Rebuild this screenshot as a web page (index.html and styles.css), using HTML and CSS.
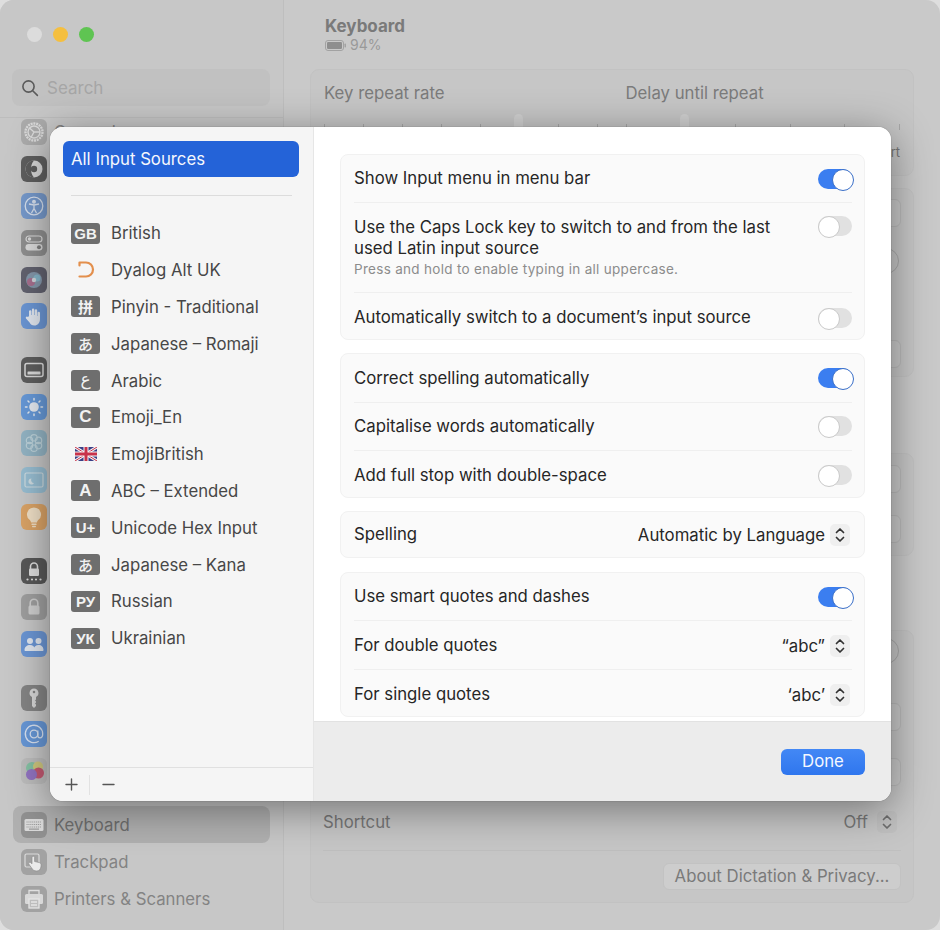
FILE: index.html
```html
<!DOCTYPE html>
<html lang="en">
<head>
    <meta charset="UTF-8" />
    <meta name="viewport" content="width=device-width, initial-scale=1" />
    <title>Keyboard - Input Sources</title>
    <link rel="stylesheet" href="styles.css">
</head>
<body>

    <div class="window">
        <aside class="sidebar">
            <div class="sidebar-head">
                <div class="lights">
                    <span class="light light-off"></span>
                    <span class="light light-yellow"></span>
                    <span class="light light-green"></span>
                </div>
                <div class="search">
                    <svg width="18" height="18" viewBox="0 0 18 18" fill="none" stroke="#5a5a5a" stroke-width="1.6"><circle cx="7.5" cy="7.5" r="5.6"/><path d="M11.7 11.7L16.4 16.4" stroke-linecap="round"/></svg>
                    <span>Search</span>
                </div>
            </div>
            <nav class="nav">
                <div class="nav-item"><span class="nav-icon ic-grey"><svg viewBox="0 0 26 26" fill="none" stroke="#dcdcdc" stroke-width="1.4"><circle cx="13" cy="13" r="8.5" stroke-dasharray="2 .8" stroke-width="2.4"/><circle cx="13" cy="13" r="6"/><path d="M13 13L8.5 9M13 13l6 0M13 13l-3 5.5"/></svg></span>General</div>
                <div class="nav-item"><span class="nav-icon ic-dark"><svg viewBox="0 0 26 26"><circle cx="13" cy="13" r="8.5" fill="#d8d8d8"/><path d="M13 4.5a8.5 8.5 0 0 0 0 17c-2-2-3-5-3-8.500s1-6.500 3-8.500z" fill="#555"/><circle cx="13" cy="13" r="3.200" fill="#555"/></svg></span></div>
                <div class="nav-item"><span class="nav-icon ic-blue"><svg viewBox="0 0 26 26" fill="none" stroke="#d9e3f2" stroke-width="1.300"><circle cx="13" cy="13" r="8.800"/><circle cx="13" cy="8.800" r="1.300" fill="#d9e3f2"/><path d="M8 11l5 1 5-1M13 12v3.500l-2.500 4.500M13 15.500l2.500 4.500"/></svg></span></div>
                <div class="nav-item"><span class="nav-icon ic-grey2"><svg viewBox="0 0 26 26"><rect x="5" y="6" width="16" height="6" rx="3" fill="none" stroke="#dcdcdc" stroke-width="1.200"/><circle cx="8.500" cy="9" r="1.700" fill="#dcdcdc"/><rect x="4.500" y="14" width="17" height="6.500" rx="3.200" fill="#dcdcdc"/><circle cx="18" cy="17.200" r="2" fill="#777"/></svg></span></div>
                <div class="nav-item"><span class="nav-icon ic-siri"><svg viewBox="0 0 26 26"><circle cx="13" cy="13" r="8" fill="#7f93a8"/><circle cx="10" cy="15" r="4" fill="#a5688a"/><circle cx="16" cy="11" r="3.500" fill="#7fb3c8"/><circle cx="13" cy="13" r="2.200" fill="#cfd6dc"/></svg></span></div>
                <div class="nav-item"><span class="nav-icon ic-blue2"><svg viewBox="0 0 26 26" fill="#e4eaf3"><path d="M8 13V8.500a1.200 1.200 0 0 1 2.400 0V12h.5V6.800a1.200 1.200 0 0 1 2.400 0V12h.5V7.500a1.200 1.200 0 0 1 2.400 0V13h.4V10a1.200 1.200 0 0 1 2.400 0v6c0 4-2.500 6.500-5.600 6.500-2.500 0-3.800-1-5-3.200L5 15.500c-.8-1.500 1-2.700 2-1.400z"/></svg></span></div>

                <div class="nav-item nav-start"><span class="nav-icon ic-dark"><svg viewBox="0 0 26 26" fill="none" stroke="#dcdcdc"><rect x="4" y="6.500" width="18" height="13" rx="2" stroke-width="1.500"/><rect x="6.500" y="14.500" width="13" height="3" rx=".6" fill="#dcdcdc" stroke="none"/></svg></span></div>
                <div class="nav-item"><span class="nav-icon ic-blue3"><svg viewBox="0 0 26 26" fill="#e8edf5" stroke="#e8edf5" stroke-width="1.500" stroke-linecap="round"><circle cx="13" cy="13" r="4.800" stroke="none"/><path d="M13 4.500v1.500M13 20v1.500M4.500 13H6M20 13h1.500M7 7l1 1M18 18l1 1M7 19l1-1M18 8l1-1"/></svg></span></div>
                <div class="nav-item"><span class="nav-icon ic-teal"><svg viewBox="0 0 26 26" fill="none" stroke="#bcd3dc" stroke-width="1.200"><circle cx="13" cy="7.800" r="3.200"/><circle cx="13" cy="18.200" r="3.200"/><circle cx="8.500" cy="10.400" r="3.200"/><circle cx="17.500" cy="10.400" r="3.200"/><circle cx="8.500" cy="15.600" r="3.200"/><circle cx="17.500" cy="15.600" r="3.200"/></svg></span></div>
                <div class="nav-item"><span class="nav-icon ic-teal2"><svg viewBox="0 0 26 26" fill="none" stroke="#cfdde3" stroke-width="1.200"><rect x="4" y="6" width="18" height="14" rx="1.500"/><path d="M10.500 11.500a3 3 0 1 0 2.500 4.500 3 3 0 0 1-2.500-4.500z" fill="#cfdde3" stroke="none"/></svg></span></div>
                <div class="nav-item"><span class="nav-icon ic-orange"><svg viewBox="0 0 26 26" fill="#f3e2c6"><path d="M13 3.500a7 7 0 0 0-4.200 12.600c.8.700 1.200 1.500 1.200 2.400h6c0-.9.400-1.700 1.200-2.400A7 7 0 0 0 13 3.500z"/><rect x="10.300" y="19.500" width="5.400" height="1.600" rx=".8"/><rect x="11" y="21.800" width="4" height="1.400" rx=".7"/></svg></span></div>

                <div class="nav-item nav-start"><span class="nav-icon ic-dark2"><svg viewBox="0 0 26 26" fill="#dedede"><path d="M9.500 11V8.500a3.500 3.500 0 0 1 7 0V11" fill="none" stroke="#dedede" stroke-width="1.600"/><rect x="8" y="10.500" width="10" height="7.500" rx="1.300"/><circle cx="6.500" cy="21.500" r="1.100"/><circle cx="11" cy="21.500" r="1.100"/><circle cx="15" cy="21.500" r="1.100"/><circle cx="19.500" cy="21.500" r="1.100"/></svg></span></div>
                <div class="nav-item"><span class="nav-icon ic-grey3"><svg viewBox="0 0 26 26" fill="#cfcfcf"><path d="M9.200 12V9a3.800 3.800 0 0 1 7.600 0v3" fill="none" stroke="#cfcfcf" stroke-width="1.600"/><rect x="7.500" y="11.500" width="11" height="9" rx="1.500"/></svg></span></div>
                <div class="nav-item"><span class="nav-icon ic-blue2"><svg viewBox="0 0 26 26" fill="#e4eaf3"><circle cx="9" cy="10" r="3"/><circle cx="17.500" cy="10" r="3"/><path d="M3.500 19c0-3 2.500-5 5.500-5s4 1.500 4.300 2.500c.3-1 1.700-2.500 4.200-2.500 3 0 5 2 5 5 0 .6-.4 1-1 1H4.500c-.6 0-1-.4-1-1z"/></svg></span></div>

                <div class="nav-item nav-start"><span class="nav-icon ic-grey4"><svg viewBox="0 0 26 26" fill="#d8d8d8"><path d="M13 3.500a4.500 4.500 0 0 0-2 8.500v9l2 2 2-2v-1.500l-1-1 1-1v-1l-1-1 1-1V12a4.500 4.500 0 0 0-2-8.500zm0 2.200a1.300 1.300 0 1 1 0 2.600 1.300 1.300 0 0 1 0-2.600z"/></svg></span></div>
                <div class="nav-item"><span class="nav-icon ic-blue4"><svg viewBox="0 0 26 26" fill="none" stroke="#d9e4f4" stroke-width="1.300"><circle cx="13" cy="13" r="3.800"/><path d="M16.800 9.500v5c0 1.500 1 2.300 2.200 2.300 1.800 0 2.700-1.800 2.700-3.800a8.700 8.700 0 1 0-4 7.300"/></svg></span></div>
                <div class="nav-item"><span class="nav-icon ic-game"><svg viewBox="0 0 26 26"><circle cx="11" cy="10" r="6" fill="#7fc0a0"/><circle cx="17" cy="8.500" r="5" fill="#d0c878"/><circle cx="17.500" cy="15" r="5.500" fill="#c2506a"/><circle cx="10.500" cy="16.500" r="5.500" fill="#8d6cc0"/></svg></span></div>

                <div class="nav-item nav-start nav-active"><span class="nav-icon ic-key"><svg viewBox="0 0 26 26"><rect x="3.500" y="7" width="19" height="12" rx="1.500" fill="#dedede"/><path d="M5.500 10h15M5.500 12.500h15M5.500 15h15" stroke="#9a9a9a" stroke-width="1.200" stroke-dasharray="1.100 .8"/><path d="M8 17.200h10" stroke="#9a9a9a" stroke-width="1.200"/></svg></span>Keyboard</div>
                <div class="nav-item"><span class="nav-icon ic-key2"><svg viewBox="0 0 26 26"><rect x="4" y="5" width="14" height="13" rx="1.500" fill="none" stroke="#dedede" stroke-width="1.200"/><path d="M11 8.500a1.300 1.300 0 0 1 2.600 0v4l4.500 1c1.200.3 2 1.200 2 2.500 0 2.800-1 6-4.500 6-2.500 0-3.800-1-5-3l-2.800-4c-.8-1.300.8-2.400 1.900-1.400l1.300 1.200z" fill="#eeeeee" stroke="#8a8a8a" stroke-width=".7"/></svg></span>Trackpad</div>
                <div class="nav-item"><span class="nav-icon ic-key2"><svg viewBox="0 0 26 26" fill="none" stroke="#e2e2e2" stroke-width="1.300"><path d="M8 8V4.500h10V8"/><rect x="4" y="8" width="18" height="10" rx="1.500" fill="#dadada" stroke="none"/><rect x="8" y="13" width="10" height="9" fill="#bdbdbd" stroke="#e8e8e8"/><path d="M10 16h6M10 19h6" stroke="#e8e8e8"/></svg></span>Printers &amp; Scanners</div>
            </nav>
        </aside>

        <main class="main">
            <div class="title-block">
                <h1>Keyboard</h1>
                <div class="battery">
                    <svg width="22" height="11" viewBox="0 0 22 11"><rect x=".5" y=".5" width="18" height="10" rx="2.500" fill="none" stroke="#a2a2a2"/><rect x="2" y="2" width="15" height="7" rx="1.200" fill="#8e8e8e"/><rect x="19.500" y="3.500" width="1.500" height="4" rx=".7" fill="#a2a2a2"/></svg>
                    <span>94%</span>
                </div>
            </div>

            <section class="card card-repeat">
                <div class="slider-col">
                    <div class="slider-label">Key repeat rate</div>
                    <div class="slider">
                        <i></i><i></i><i></i><i></i><i></i><i></i><i></i><i></i>
                        <span class="thumb thumb-rate"></span>
                    </div>
                </div>
                <div class="slider-col">
                    <div class="slider-label">Delay until repeat</div>
                    <div class="slider">
                        <i></i><i></i><i></i><i></i><i></i><i></i>
                        <span class="thumb thumb-delay"></span>
                    </div>
                    <div class="slider-end">Short</div>
                </div>
            </section>

            <section class="card card-options">
                <div class="row"><span class="ghost-btn"></span></div>
                <div class="row"><span class="ghost-circle"></span></div>
                <div class="row"><span class="ghost-btn"></span></div>
            </section>

            <section class="card card-text">
                <div class="row"><span class="ghost-btn"></span></div>
                <div class="row"><span class="ghost-btn"></span></div>
            </section>

            <section class="card card-dictation">
                <div class="row"><span class="ghost-circle"></span></div>
                <div class="row"><span class="ghost-btn"></span></div>
                <div class="row"><span class="ghost-btn"></span></div>
                <div class="row">
                    <span class="row-name">Shortcut</span>
                    <span class="row-value">Off</span>
                    <span class="stepper stepper-dim"><svg width="10" height="16" viewBox="0 0 10 16" fill="none" stroke="#6e6e6e" stroke-width="1.700" stroke-linecap="round" stroke-linejoin="round"><path d="M1.500 5.500L5 2l3.500 3.500M1.500 10.500L5 14l3.500-3.500"/></svg></span>
                </div>
                <div class="row row-about"><button class="about-btn">About Dictation &amp; Privacy...</button></div>
            </section>
        </main>
    </div>

    <div class="modal">
        <div class="modal-side">
            <div class="source-all">All Input Sources</div>
            <div class="source-divider"></div>
            <div class="source-list">
                <div class="source"><span class="badge">GB</span>British</div>
                <div class="source"><span class="badge badge-clear"><svg width="20" height="20" viewBox="0 0 20 20" fill="none" stroke="#e38f4c" stroke-width="2.200" stroke-linecap="round" stroke-linejoin="round"><path d="M3.500 5.500V2.500h6.500a7 7 0 0 1 0 14H3.500"/></svg></span>Dyalog Alt UK</div>
                <div class="source"><span class="badge badge-cjk badge-han">拼</span>Pinyin - Traditional</div>
                <div class="source"><span class="badge badge-cjk">あ</span>Japanese – Romaji</div>
                <div class="source"><span class="badge badge-arabic">ع</span>Arabic</div>
                <div class="source"><span class="badge badge-big">C</span>Emoji_En</div>
                <div class="source"><span class="badge badge-clear"><svg width="22" height="14" viewBox="0 0 22 14"><rect width="22" height="14" rx="1.500" fill="#3a3f86"/><path d="M0 0L22 14M22 0L0 14" stroke="#f4f4f4" stroke-width="3"/><path d="M0 0L22 14M22 0L0 14" stroke="#c8324a" stroke-width="1"/><path d="M11 0v14M0 7h22" stroke="#f4f4f4" stroke-width="5"/><path d="M11 0v14M0 7h22" stroke="#c8324a" stroke-width="3"/></svg></span>EmojiBritish</div>
                <div class="source"><span class="badge badge-big">A</span>ABC – Extended</div>
                <div class="source"><span class="badge">U+</span>Unicode Hex Input</div>
                <div class="source"><span class="badge badge-cjk">あ</span>Japanese – Kana</div>
                <div class="source"><span class="badge">РУ</span>Russian</div>
                <div class="source"><span class="badge">УК</span>Ukrainian</div>
            </div>
            <div class="modal-tools">
                <span class="tool"><svg width="13" height="13" viewBox="0 0 13 13" stroke="#555" stroke-width="1.400" stroke-linecap="round"><path d="M6.500 1v11M1 6.500h11"/></svg></span>
                <span class="tool-sep"></span>
                <span class="tool"><svg width="13" height="13" viewBox="0 0 13 13" stroke="#555" stroke-width="1.400" stroke-linecap="round"><path d="M1 6.500h11"/></svg></span>
            </div>
        </div>

        <div class="modal-main">
            <div class="modal-content">
                <div class="group">
                    <div class="item">
                        <span class="item-text">Show Input menu in menu bar</span>
                        <span class="toggle on"></span>
                    </div>
                    <div class="item item-tall">
                        <div class="item-text">
                            Use the Caps Lock key to switch to and from the last used Latin input source
                            <div class="item-note">Press and hold to enable typing in all uppercase.</div>
                        </div>
                        <span class="toggle"></span>
                    </div>
                    <div class="item">
                        <span class="item-text">Automatically switch to a document’s input source</span>
                        <span class="toggle"></span>
                    </div>
                </div>

                <div class="group">
                    <div class="item">
                        <span class="item-text">Correct spelling automatically</span>
                        <span class="toggle on"></span>
                    </div>
                    <div class="item">
                        <span class="item-text">Capitalise words automatically</span>
                        <span class="toggle"></span>
                    </div>
                    <div class="item">
                        <span class="item-text">Add full stop with double-space</span>
                        <span class="toggle"></span>
                    </div>
                </div>

                <div class="group">
                    <div class="item item-short">
                        <span class="item-text">Spelling</span>
                        <span class="picker">Automatic by Language<span class="stepper"><svg width="10" height="16" viewBox="0 0 10 16" fill="none" stroke="#333" stroke-width="1.700" stroke-linecap="round" stroke-linejoin="round"><path d="M1.500 5.500L5 2l3.500 3.500M1.500 10.500L5 14l3.500-3.500"/></svg></span></span>
                    </div>
                </div>

                <div class="group group-quotes">
                    <div class="item">
                        <span class="item-text">Use smart quotes and dashes</span>
                        <span class="toggle on"></span>
                    </div>
                    <div class="item">
                        <span class="item-text">For double quotes</span>
                        <span class="picker">“abc”<span class="stepper"><svg width="10" height="16" viewBox="0 0 10 16" fill="none" stroke="#333" stroke-width="1.700" stroke-linecap="round" stroke-linejoin="round"><path d="M1.500 5.500L5 2l3.500 3.500M1.500 10.500L5 14l3.500-3.500"/></svg></span></span>
                    </div>
                    <div class="item">
                        <span class="item-text">For single quotes</span>
                        <span class="picker">‘abc’<span class="stepper"><svg width="10" height="16" viewBox="0 0 10 16" fill="none" stroke="#333" stroke-width="1.700" stroke-linecap="round" stroke-linejoin="round"><path d="M1.500 5.500L5 2l3.500 3.500M1.500 10.500L5 14l3.500-3.500"/></svg></span></span>
                    </div>
                </div>
            </div>
            <div class="modal-foot">
                <button class="done-btn">Done</button>
            </div>
        </div>
    </div>

</body>
</html>
```

FILE: styles.css
```css
* {
    box-sizing: border-box;
}
html, body {
    height: 100%;
}
body {
    margin: 0;
    overflow: hidden;
    background: #dedede;
    font-family: Inter, "Noto Sans", sans-serif;
    font-size: 16.75px;
}

/* window behind the sheet */
.window {
    display: flex;
    width: 940px;
    height: 930px;
    background: #c9c9c9;
    border-radius: 14px;
    overflow: hidden;
}
.sidebar {
    width: 284px;
    flex: none;
    background: #c7c7c7;
    border-right: 1px solid #bebebe;
    display: flex;
    flex-direction: column;
}
.sidebar-head {
    height: 118px;
    flex: none;
    border-bottom: 1px solid #bdbdbd;
}
.lights {
    display: flex;
    gap: 11px;
    padding: 27px 0 0 27px;
}
.light {
    width: 15px;
    height: 15px;
    border-radius: 50%;
}
.light-off {
    background: #dcdcdc;
}
.light-yellow {
    background: #f5bf3f;
}
.light-green {
    background: #5fc452;
}
.search {
    display: flex;
    align-items: center;
    gap: 8px;
    height: 37px;
    margin: 27px 13px 0 12px;
    padding-left: 9px;
    background: #c1c1c1;
    border-radius: 8px;
    color: #a6a6a6;
    font-size: 17px;
}
.nav {
    flex: 1;
    overflow: hidden;
    padding: 0 8px 0 21px;
}
.nav-item {
    display: flex;
    align-items: center;
    gap: 7px;
    height: 36.8px;
    color: #838383;
    font-size: 16.75px;
}
.nav-item:first-child {
    margin-top: -4px;
}
.nav-start {
    margin-top: 16.7px;
}
.nav-active {
    margin-left: -8px;
    margin-right: 5px;
    margin-bottom: 0.6px;
    padding-left: 8px;
    background: #b0b0b0;
    border-radius: 8px;
    color: #6e6e6e;
}
.nav-icon {
    width: 26px;
    height: 26px;
    flex: none;
    border-radius: 6px;
    overflow: hidden;
    opacity: 0.92;
}
.nav-icon svg {
    display: block;
    width: 26px;
    height: 26px;
}
.ic-grey { background: #a9a9a9; }
.ic-dark { background: #565656; }
.ic-blue { background: #7096cc; }
.ic-grey2 { background: #8a8a8a; }
.ic-siri { background: #5a5a68; }
.ic-blue2 { background: #6492d6; }
.ic-blue3 { background: #5f96da; }
.ic-teal { background: #8fb3c4; }
.ic-teal2 { background: #93bdd2; }
.ic-orange { background: #dca05e; }
.ic-dark2 { background: #4f4f4f; }
.ic-grey3 { background: #9c9c9c; }
.ic-grey4 { background: #7f7f7f; }
.ic-blue4 { background: #5f93d8; }
.ic-game { background: #bcbcbc; }
.ic-key { background: #8f8f8f; }
.ic-key2 { background: #9f9f9f; }

.main {
    flex: 1;
    padding: 0 26px 0 26px;
    color: #777;
}
.title-block {
    height: 69px;
    padding: 16px 0 0 15px;
}
.title-block h1 {
    margin: 0;
    font-size: 17px;
    line-height: 20px;
    font-weight: 700;
    color: #7a7a7a;
}
.battery {
    display: flex;
    align-items: center;
    gap: 3px;
    font-size: 14px;
    line-height: 18px;
    color: #999;
}

.card {
    background: #c6c6c6;
    border: 1px solid #c2c2c2;
    border-radius: 9px;
    margin-bottom: 12px;
}
.card-repeat {
    display: flex;
    height: 107px;
    padding: 13px 13px 0;
    gap: 27px;
}
.slider-col {
    flex: 1;
}
.slider-label {
    line-height: 20px;
    color: #7b7b7b;
}
.slider {
    position: relative;
    display: flex;
    justify-content: space-between;
    margin-top: 21px;
}
.slider i {
    width: 1px;
    height: 6px;
    background: #a8a8a8;
}
.thumb {
    position: absolute;
    top: -10px;
    width: 9px;
    height: 24px;
    background: #d0d0d0;
    border-radius: 5px;
}
.thumb-rate {
    left: 190px;
}
.thumb-delay {
    left: 54px;
}
.slider-end {
    text-align: right;
    margin-top: 14px;
    font-size: 13px;
    color: #777;
}
.card-options {
    height: 189px;
    margin-bottom: 76px;
    padding: 0 12px;
}
.card-text {
    height: 103px;
    margin-bottom: 74px;
    padding: 0 12px;
}
.card-dictation {
    height: 273px;
    margin-bottom: 0;
    padding: 0 12px;
}
.row {
    display: flex;
    align-items: center;
    justify-content: flex-end;
}
.card-options .row:nth-child(1) {
    height: 48px;
}
.card-options .row:nth-child(2) {
    height: 48px;
}
.card-options .row:nth-child(3) {
    height: 92px;
    padding-top: 46px;
}
.card-text .row {
    height: 50px;
}
.card-dictation .row:nth-child(1) {
    height: 40px;
}
.card-dictation .row:nth-child(2) {
    height: 54px;
    margin-top: 19px;
}
.card-dictation .row:nth-child(3) {
    height: 56px;
}
.card-dictation .row:nth-child(4) {
    height: 44px;
    margin-bottom: 6px;
}
.ghost-btn {
    width: 60px;
    height: 28px;
    background: #c9c9c9;
    border: 1px solid #bababa;
    border-radius: 6px;
}
.ghost-circle {
    width: 26px;
    height: 26px;
    border: 1px solid #a9a9a9;
    border-radius: 50%;
    margin-right: 2px;
}
.row-name {
    margin-right: auto;
    color: #777;
}
.row-value {
    color: #777;
    margin-right: 9px;
}
.row-about {
    height: 52px;
    border-top: 1px solid #bfbfbf;
}
.about-btn {
    width: 238px;
    height: 27px;
    background: #cdcdcd;
    border: 1px solid #c2c2c2;
    border-radius: 6px;
    font-family: inherit;
    font-size: 16.75px;
    color: #7a7a7a;
    padding: 0 0 1px;
}
.stepper {
    display: inline-flex;
    align-items: center;
    justify-content: center;
    width: 20px;
    height: 22px;
    margin-left: 5px;
    background: #efefef;
    border-radius: 5px;
}
.stepper-dim {
    background: #c0c0c0;
    margin: 0 4px 0 0;
}

/* input sources sheet */
.modal {
    position: absolute;
    left: 50px;
    top: 127px;
    width: 841px;
    height: 674px;
    display: flex;
    border-radius: 13px;
    overflow: hidden;
    box-shadow: 0 0 0 1px rgba(0, 0, 0, 0.06), 0 8px 42px rgba(0, 0, 0, 0.42);
    background: white;
}
.modal-side {
    width: 264px;
    flex: none;
    display: flex;
    flex-direction: column;
    background: #f5f5f5;
    border-right: 1px solid #e6e6e6;
}
.source-all {
    margin: 14px 14px 0 13px;
    height: 36px;
    line-height: 37px;
    padding-left: 8px;
    background: #2463d8;
    border-radius: 6px;
    color: #f5f7fd;
}
.source-divider {
    height: 1px;
    margin: 18px 21px 0;
    background: #dcdcdc;
}
.source-list {
    flex: 1;
    padding: 19px 0 0 21px;
}
.source {
    display: flex;
    align-items: center;
    gap: 11px;
    height: 36.8px;
    color: #474747;
}
.badge {
    display: inline-flex;
    align-items: center;
    justify-content: center;
    width: 29px;
    height: 21px;
    flex: none;
    background: #6e6e6e;
    border-radius: 3px;
    color: #f2f2f2;
    font-size: 15px;
    font-weight: 700;
    font-family: "Liberation Sans", "DejaVu Sans", sans-serif;
}
.badge-big {
    font-size: 17px;
}
.badge-arabic {
    padding-bottom: 4px;
    font-size: 17px;
    font-weight: 400;
    font-family: "DejaVu Sans", sans-serif;
}
.badge-cjk {
    font-size: 15px;
    font-weight: 500;
    font-family: "Noto Sans CJK JP", sans-serif;
}
.badge-han {
    font-weight: 700;
    font-family: "Noto Sans CJK SC", sans-serif;
}
.badge-clear {
    background: none;
}
.modal-tools {
    display: flex;
    align-items: center;
    height: 34px;
    border-top: 1px solid #e0e0e0;
    padding-left: 15px;
}
.tool {
    display: flex;
}
.tool-sep {
    width: 1px;
    height: 20px;
    margin: 0 12px 0 11px;
    background: #e2e2e2;
}
.modal-main {
    flex: 1;
    display: flex;
    flex-direction: column;
}
.modal-content {
    flex: 1;
    background: white;
    padding: 27px 26px 0 26px;
    display: flex;
    flex-direction: column;
    gap: 13.6px;
    overflow: hidden;
}
.group {
    background: #fafafa;
    border: 1px solid #f1f1f1;
    border-radius: 8px;
    flex: none;
}
.item {
    display: flex;
    align-items: center;
    justify-content: space-between;
    height: 48.2px;
    margin: 0 12px 0 13px;
    border-top: 1px solid #efefef;
    color: #262626;
}
.item:first-child {
    height: 47.4px;
    border-top: none;
}
.item:last-child {
    height: 46.8px;
    padding-top: 3px;
}
.item-tall {
    align-items: flex-start;
    height: 90px;
    padding-top: 14px;
}
.item.item-short {
    height: 45px;
    padding-top: 0;
}
.group .item-tall + .item {
    height: 46.4px;
}
.group-quotes .item:nth-child(2) {
    height: 48.9px;
    padding-top: 1px;
}
.item-text {
    line-height: 21px;
}
.item-tall .item-text {
    width: 440px;
}
.item-tall .toggle {
    margin-top: -1px;
}
.item-note {
    font-size: 13.5px;
    letter-spacing: 0.3px;
    line-height: 20px;
    color: #8c8c8c;
}
.toggle {
    position: relative;
    width: 34px;
    height: 20px;
    flex: none;
    background: #e1e1e1;
    border-radius: 10px;
}
.toggle::after {
    content: "";
    position: absolute;
    left: 0;
    top: 0;
    width: 20px;
    height: 20px;
    background: white;
    border: 1px solid #c9c9c9;
    border-radius: 50%;
}
.toggle.on {
    background: #3b7ef0;
}
.toggle.on::after {
    left: 14px;
    border-color: #3a6fc8;
}
.picker {
    display: flex;
    align-items: center;
    margin-right: 2px;
}
.modal-foot {
    height: 80px;
    flex: none;
    display: flex;
    align-items: flex-start;
    justify-content: flex-end;
    padding: 27px 26px 0 0;
    background: #ececec;
    border-top: 1px solid #e2e2e2;
}
.done-btn {
    width: 84px;
    height: 26px;
    background: linear-gradient(#4388f5, #2f76ee);
    border: none;
    border-radius: 6px;
    color: #f5f8ff;
    font-family: inherit;
    font-size: 16.75px;
    padding: 0 0 2px;
}
```
